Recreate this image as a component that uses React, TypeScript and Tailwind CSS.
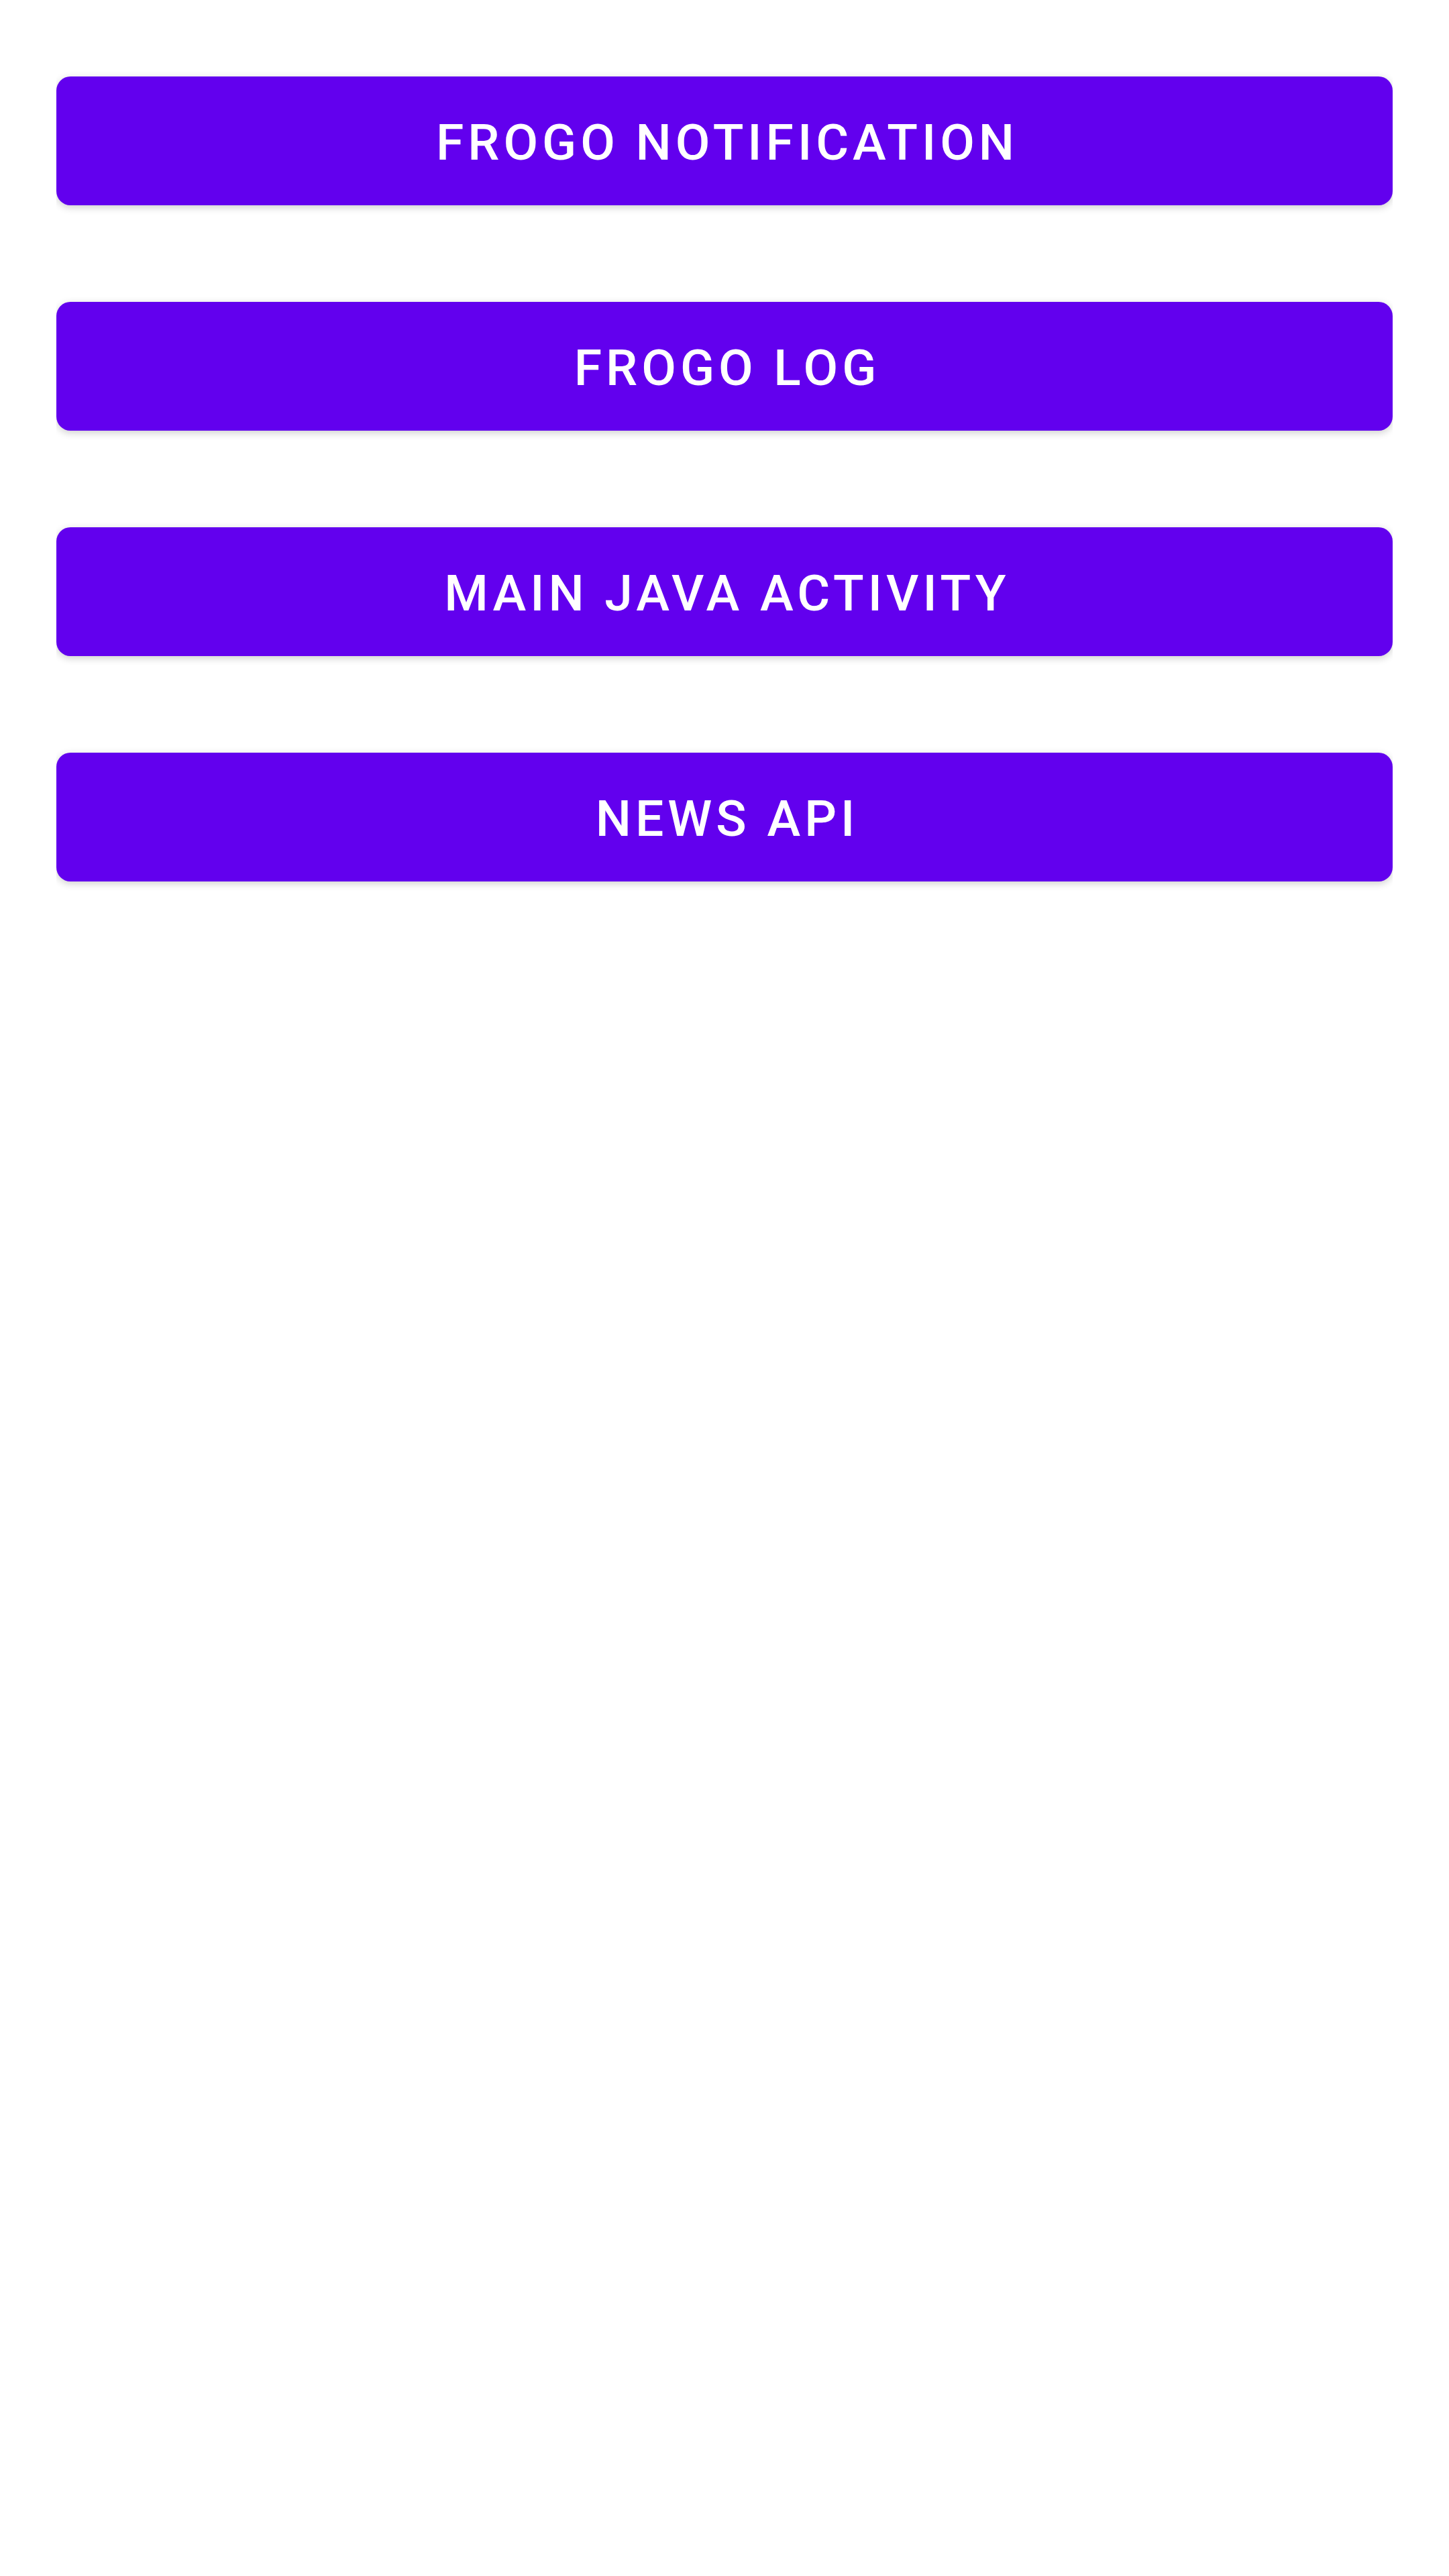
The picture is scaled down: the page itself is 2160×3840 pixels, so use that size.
const screens = ["Frogo Notification", "Frogo Log", "Main Java Activity", "News API"];

export default function App() {
  return (
    <main className="min-h-screen bg-white px-21 font-[Roboto,sans-serif]">
      <div className="flex flex-col gap-36 overflow-x-clip pt-[114px] pb-36">
        {screens.map((name) => (
          <button
            key={name}
            type="button"
            className="h-48 w-full rounded-[21px] bg-[#6200ee] pt-1 pl-2 text-[75px] leading-none font-medium tracking-[6px] text-white uppercase shadow-[0_3px_12px_rgba(0,0,0,0.2)]"
          >
            {name}
          </button>
        ))}
      </div>
    </main>
  );
}
